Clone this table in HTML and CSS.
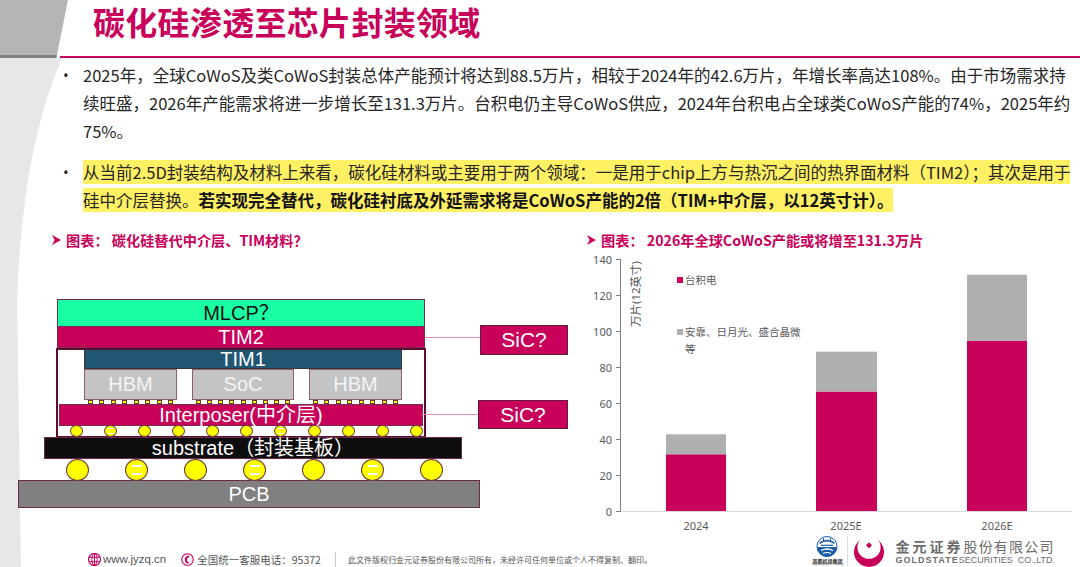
FILE: index.html
```html
<!DOCTYPE html>
<html lang="zh-CN">
<head>
<meta charset="utf-8">
<title>碳化硅渗透至芯片封装领域</title>
<link rel="stylesheet" href="styles.css">
</head>
<body>
<div class="page">
  <svg class="side-deco" width="70" height="567" viewBox="0 0 70 567" aria-hidden="true">
    <polygon points="0,0 68,0 57,55 0,55" fill="#b4b5b7"/>
    <polygon points="0,55 57,55 56.4,58 0,58" fill="#808082"/>
    <path d="M0,58 L62,58 Q22,150 17,300 L21,567 L0,567 Z" fill="#e6e7e8"/>
  </svg>

  <header class="header">
    <h1 class="title">碳化硅渗透至芯片封装领域</h1>
  </header>

  <section class="bullets">
    <div class="bullet">
      <span class="dot">•</span>
      <p class="btext">2025年，全球CoWoS及类CoWoS封装总体产能预计将达到88.5万片，相较于2024年的42.6万片，年增长率高达108%。由于市场需求持<br>续旺盛，2026年产能需求将进一步增长至131.3万片。台积电仍主导CoWoS供应，2024年台积电占全球类CoWoS产能的74%，2025年约<br>75%。</p>
    </div>
    <div class="bullet second">
      <span class="dot">•</span>
      <p class="btext"><span class="hl">从当前2.5D封装结构及材料上来看，碳化硅材料或主要用于两个领域：一是用于chip上方与热沉之间的热界面材料（TIM2）；其次是用于<br>硅中介层替换。<strong class="strong">若实现完全替代，碳化硅衬底及外延需求将是CoWoS产能的2倍（TIM+中介层，以12英寸计）。</strong></span></p>
    </div>
  </section>

  <section class="lower">
    <div class="col-left">
      <div class="fig-title">
        <svg class="arrow" width="9" height="10" viewBox="0 0 9 10" aria-hidden="true"><polygon points="0,0 9,5 0,10 2.6,5" fill="#c8005a"/></svg>
        <span>图表： 碳化硅替代中介层、TIM材料？</span>
      </div>
      <div class="diagram">
        <div class="mlcp">MLCP？</div>
        <div class="tim2">TIM2</div>
        <div class="frame">
          <div class="tim1">TIM1</div>
          <div class="chips">
            <div class="chip hbm">HBM</div>
            <div class="chip soc">SoC</div>
            <div class="chip hbm">HBM</div>
          </div>
          <div class="bumps">
            <div class="bump-group hbm"><i></i><i></i><i></i><i></i><i></i><i></i><i></i><i></i></div>
            <div class="bump-group soc"><i></i><i></i><i></i><i></i><i></i><i></i><i></i><i></i><i></i></div>
            <div class="bump-group hbm"><i></i><i></i><i></i><i></i><i></i><i></i><i></i><i></i></div>
          </div>
          <div class="interposer">Interposer(中介层)</div>
          <div class="balls small">
            <i></i><i class="eq"></i><i></i><i></i><i></i><i></i><i class="eq"></i><i></i><i></i><i></i><i></i>
          </div>
        </div>
        <div class="substrate">substrate（封装基板）</div>
        <div class="balls big">
          <i></i><i class="eq"></i><i></i><i class="eq"></i><i></i><i class="eq"></i><i></i>
        </div>
        <div class="pcb">PCB</div>

        <span class="lead l1"></span>
        <span class="lead l2"></span>
        <div class="callout c1">SiC?</div>
        <div class="callout c2">SiC?</div>
      </div>
    </div>

    <div class="col-right">
      <div class="fig-title">
        <svg class="arrow" width="9" height="10" viewBox="0 0 9 10" aria-hidden="true"><polygon points="0,0 9,5 0,10 2.6,5" fill="#c8005a"/></svg>
        <span>图表： 2026年全球CoWoS产能或将增至131.3万片</span>
      </div>
      <svg class="chart" width="510" height="285" viewBox="0 0 510 285">
        <rect x="96" y="204.3" width="60" height="56.7" fill="#c8005a"/>
        <rect x="96" y="184.3" width="60" height="20" fill="#b0b0b0"/>
        <rect x="246" y="141.5" width="61" height="119.5" fill="#c8005a"/>
        <rect x="246" y="101.7" width="61" height="39.8" fill="#b0b0b0"/>
        <rect x="397" y="91" width="60" height="170" fill="#c8005a"/>
        <rect x="397" y="24.7" width="60" height="66.3" fill="#b0b0b0"/>

        <line x1="50" y1="261.5" x2="502" y2="261.5" stroke="#d9d9d9" stroke-width="1"/>
        <line x1="50.5" y1="9" x2="50.5" y2="262" stroke="#7f7f7f" stroke-width="1"/>
        <g stroke="#7f7f7f" stroke-width="1">
          <line x1="46" y1="261.5" x2="50" y2="261.5"/>
          <line x1="46" y1="225.5" x2="50" y2="225.5"/>
          <line x1="46" y1="189.5" x2="50" y2="189.5"/>
          <line x1="46" y1="153.5" x2="50" y2="153.5"/>
          <line x1="46" y1="117.5" x2="50" y2="117.5"/>
          <line x1="46" y1="81.5" x2="50" y2="81.5"/>
          <line x1="46" y1="45.5" x2="50" y2="45.5"/>
          <line x1="46" y1="9.5" x2="50" y2="9.5"/>
        </g>
        <g class="tick" text-anchor="end">
          <text x="42" y="261">0</text>
          <text x="42" y="225">20</text>
          <text x="42" y="189">40</text>
          <text x="42" y="153">60</text>
          <text x="42" y="117">80</text>
          <text x="42" y="81">100</text>
          <text x="42" y="45">120</text>
          <text x="42" y="9">140</text>
        </g>
        <text class="ytitle" x="65" y="44" text-anchor="middle" transform="rotate(-90 65 44)">万片(12英寸)</text>

        <rect x="107" y="27" width="6" height="6" fill="#c8005a"/>
        <text class="legend" x="115" y="30">台积电</text>
        <rect x="107" y="79" width="6" height="6" fill="#b0b0b0"/>
        <text class="legend" x="115" y="82">安靠、日月光、盛合晶微</text>
        <text class="legend" x="115" y="99">等</text>

        <g class="tick" text-anchor="middle">
          <text x="126" y="275">2024</text>
          <text x="276" y="275">2025E</text>
          <text x="427" y="275">2026E</text>
        </g>
      </svg>
    </div>
  </section>

  <footer class="footer">
    <div class="contact">
      <svg class="ico" width="13" height="13" viewBox="0 0 13 13" aria-hidden="true">
        <circle cx="6.5" cy="6.5" r="6" fill="none" stroke="#c8005a" stroke-width="1.1"/>
        <ellipse cx="6.5" cy="6.5" rx="2.6" ry="6" fill="none" stroke="#c8005a" stroke-width="1"/>
        <line x1="6.5" y1="0.5" x2="6.5" y2="12.5" stroke="#c8005a" stroke-width="1"/>
        <line x1="0.8" y1="4.3" x2="12.2" y2="4.3" stroke="#c8005a" stroke-width="1"/>
        <line x1="0.8" y1="8.7" x2="12.2" y2="8.7" stroke="#c8005a" stroke-width="1"/>
      </svg>
      <span class="site">www.jyzq.cn</span>
      <svg class="ico phone" width="13" height="13" viewBox="0 0 13 13" aria-hidden="true">
        <circle cx="6.5" cy="6.5" r="5.8" fill="none" stroke="#c8005a" stroke-width="1.1"/>
        <path d="M8.2,2.6 C5.2,2.6 3.6,5 3.9,7.6 C4.1,9.5 5.6,10.7 7.4,10.6 L7.9,8.9 C6.8,8.9 6,8.4 5.9,7.2 C5.8,5.8 6.6,4.6 7.8,4.4 Z" fill="#c8005a"/>
      </svg>
      <span class="hotline">全国统一客服电话：95372</span>
      <span class="sep"></span>
      <span class="copy">此文件版权归金元证券股份有限公司所有，未经许可任何单位或个人不得复制、翻印。</span>
    </div>
    <div class="brand">
      <div class="airport">
        <svg width="24" height="21" viewBox="0 0 24 21" aria-hidden="true">
          <circle cx="12" cy="10.5" r="10" fill="#fff" stroke="#1d5fa6" stroke-width="1"/>
          <path d="M2,11 A10,10 0 0 0 22,11 Z" fill="#1d5fa6"/>
          <path d="M4.5,7.2 Q12,2.2 19.5,7.2" fill="none" stroke="#1d5fa6" stroke-width="1.8"/>
          <line x1="8.5" y1="5" x2="8.5" y2="2.2" stroke="#1d5fa6" stroke-width="1.2"/>
          <line x1="15.5" y1="5" x2="15.5" y2="2.2" stroke="#1d5fa6" stroke-width="1.2"/>
          <line x1="6" y1="9.3" x2="18" y2="9.3" stroke="#1d5fa6" stroke-width="1.2"/>
          <path d="M6,14.5 Q12,11.5 18,14.5" fill="none" stroke="#fff" stroke-width="1.3"/>
          <path d="M8,17.5 Q12,15.5 16,17.5" fill="none" stroke="#fff" stroke-width="1.1"/>
        </svg>
        <span class="ap-cn">首都机场集团</span>
        <span class="ap-en">Capital Airports Holding</span>
      </div>
      <span class="vdiv"></span>
      <svg class="gs-logo" width="36" height="31" viewBox="0 0 36 31" aria-hidden="true">
        <circle cx="18" cy="16" r="15" fill="#c8005a"/>
        <circle cx="18" cy="11.2" r="11.6" fill="#fff"/>
        <polygon points="18,6.2 21,9.2 18,12.2 15,9.2" fill="#c8005a"/>
      </svg>
      <div class="gs-name">
        <div class="gs-cn"><b>金元证券</b>股份有限公司</div>
        <div class="gs-en"><b>GOLDSTATE</b>SECURITIES&nbsp; CO.,LTD.</div>
      </div>
    </div>
  </footer>
</div>
</body>
</html>
```

FILE: styles.css
```css
* { box-sizing: border-box; }

html, body {
  margin: 0;
  padding: 0;
  background: #ffffff;
}

body {
  font-family: "Noto Sans", "Noto Sans CJK SC", sans-serif;
  color: #262626;
}

.page {
  position: relative;
  width: 1080px;
  height: 567px;
  overflow: hidden;
  background: #ffffff;
}

.side-deco {
  position: absolute;
  left: 0;
  top: 0;
  z-index: 0;
}

.header,
.bullets,
.lower,
.footer {
  position: relative;
  z-index: 1;
}

/* ---------- header ---------- */
.header {
  display: flex;
  align-items: flex-start;
  height: 58px;
  margin-left: 60px;
  border-bottom: 2px solid #c8005a;
}

.title {
  margin: -2px 0 0 0;
  padding-left: 33px;
  font-family: "Noto Sans CJK SC", sans-serif;
  font-weight: 700;
  font-size: 32px;
  line-height: 46px;
  color: #c8005a;
  letter-spacing: 0.3px;
  white-space: nowrap;
}

/* ---------- bullets ---------- */
.bullets {
  padding-top: 3px;
  padding-left: 63px;
}

.bullet {
  display: flex;
  align-items: flex-start;
}

.bullet.second {
  margin-top: 13px;
}

.dot {
  width: 20px;
  flex: none;
  font-size: 15px;
  line-height: 28px;
  color: #262626;
}

.btext {
  margin: 0;
  font-family: "Noto Sans CJK SC", sans-serif;
  font-size: 16.5px;
  line-height: 28px;
  white-space: nowrap;
  color: #262626;
}

.hl {
  background: #fff064;
}

.strong {
  font-weight: 700;
  color: #111111;
}

/* ---------- lower section ---------- */
.lower {
  display: flex;
  height: 321px;
}

.col-left {
  width: 570px;
  flex: none;
}

.col-right {
  flex: 1;
}

.fig-title {
  display: flex;
  align-items: center;
  gap: 5px;
  height: 20px;
  margin-top: 16px;
  font-family: "Noto Sans CJK SC", sans-serif;
  font-weight: 700;
  font-size: 14.2px;
  color: #c8005a;
  white-space: nowrap;
}

.col-left .fig-title { margin-left: 52px; }
.col-right .fig-title { margin-left: 17px; }

.arrow { flex: none; }

/* ---------- diagram ---------- */
.diagram {
  position: relative;
  height: 208px;
  margin-top: 49px;
  font-family: "Liberation Sans", Arial, "Noto Sans CJK SC", sans-serif;
  font-size: 20px;
  text-align: center;
  white-space: nowrap;
}

.mlcp {
  margin-left: 57px;
  width: 368px;
  height: 28px;
  line-height: 26px;
  background: #1affa3;
  border: 1px solid #7b2a4f;
  color: #111111;
}

.tim2 {
  margin-left: 57px;
  width: 368px;
  height: 21px;
  line-height: 20px;
  background: #c8005a;
  border: 1px solid #7b2a4f;
  border-top: 0;
  color: #ffffff;
}

.frame {
  margin-left: 56px;
  width: 370px;
  height: 90px;
  border: 2px solid #5c0d33;
}

.tim1 {
  margin-left: 26px;
  width: 318px;
  height: 19px;
  line-height: 18px;
  background: #215673;
  border: 1px solid #3b3346;
  border-top: 0;
  color: #ffffff;
}

.chips,
.bumps {
  display: flex;
  gap: 15px;
  margin-left: 26px;
}

.chips { height: 31px; }

.chip {
  height: 31px;
  line-height: 29px;
  background: #c4c4c4;
  border: 1px solid #8d6070;
  color: #f4f4f4;
}

.chip.hbm, .bump-group.hbm { width: 93px; }
.chip.soc, .bump-group.soc { width: 102px; }

.bumps { height: 4px; }

.bump-group {
  display: flex;
  justify-content: space-between;
  padding: 0 4px;
}

.bump-group i {
  display: block;
  width: 5px;
  height: 4px;
  background: #ffff00;
  border: 1px solid #6b3b3b;
}

.interposer {
  margin-left: 1px;
  width: 364px;
  height: 22px;
  line-height: 21px;
  background: #c8005a;
  border: 1px solid #7a2a50;
  color: #ffffff;
}

.balls {
  display: flex;
  align-items: center;
}

.balls i {
  display: flex;
  align-items: center;
  justify-content: center;
  flex: none;
  border-radius: 50%;
  background: #ffff00;
  border: 1px solid #6b3b3b;
}

.balls.small {
  height: 10px;
  gap: 21px;
  margin-left: 12px;
}

.balls.small i {
  width: 13px;
  height: 12px;
}

.balls.small i.eq::after {
  content: "";
  display: block;
  width: 6px;
  height: 4px;
  border-top: 1px solid #ffffff;
  border-bottom: 1px solid #ffffff;
}

.substrate {
  margin-top: -1px;
  margin-left: 44px;
  width: 418px;
  height: 22px;
  line-height: 20px;
  background: #0d0d0d;
  border: 1px solid #6b2a4a;
  color: #ffffff;
}

.balls.big {
  height: 21px;
  gap: 36px;
  margin-left: 66px;
}

.balls.big i {
  width: 23px;
  height: 22px;
}

.balls.big i.eq::after {
  content: "";
  display: block;
  width: 10px;
  height: 6px;
  border-top: 2px solid #ffffff;
  border-bottom: 2px solid #ffffff;
}

.pcb {
  margin-left: 18px;
  width: 462px;
  height: 28px;
  line-height: 26px;
  background: #808080;
  border: 1px solid #6b2a4a;
  color: #ffffff;
}

/* callouts over the diagram */
.lead {
  position: absolute;
  height: 1px;
  background: #f38db5;
}

.l1 { left: 425px; top: 38px; width: 55px; }
.l2 { left: 422px; top: 115px; width: 56px; }

.callout {
  position: absolute;
  background: #c8005a;
  border: 1px solid #5a1d3c;
  color: #ffffff;
  font-size: 21px;
}

.c1 { left: 480px; top: 26px; width: 88px; height: 30px; line-height: 28px; }
.c2 { left: 478px; top: 101px; width: 90px; height: 29px; line-height: 27px; }

/* ---------- chart ---------- */
.chart {
  display: block;
  overflow: visible;
}

.chart text {
  font-family: "Noto Sans", "Noto Sans CJK SC", sans-serif;
  fill: #595959;
  dominant-baseline: central;
}

.chart .tick { font-size: 11px; }
.chart .legend { font-size: 10.5px; }
.chart .ytitle { font-size: 11.5px; }

/* ---------- footer ---------- */
.footer {
  display: flex;
  height: 32px;
}

.contact {
  display: flex;
  align-items: center;
  height: 16px;
  margin-top: 16px;
  margin-left: 88px;
  color: #555555;
  white-space: nowrap;
}

.ico { flex: none; display: block; }

.site {
  margin-left: 2px;
  font-family: "Liberation Sans", Arial, sans-serif;
  font-size: 11.5px;
}

.phone { margin-left: 15px; }

.hotline {
  margin-left: 3px;
  font-family: "Noto Sans CJK SC", sans-serif;
  font-size: 10.5px;
}

.sep {
  width: 1px;
  height: 15px;
  margin-left: 14px;
  background: #cccccc;
}

.copy {
  margin-left: 12px;
  font-family: "Noto Sans CJK SC", sans-serif;
  font-size: 8px;
  color: #555555;
}

.brand {
  display: flex;
  align-items: center;
  margin-left: auto;
  margin-right: 25px;
  height: 32px;
}

.airport {
  display: flex;
  flex-direction: column;
  align-items: center;
  width: 34px;
  height: 32px;
  padding-top: 1px;
  line-height: 1;
  white-space: nowrap;
}

.airport svg { display: block; }

.ap-cn {
  margin-top: 1px;
  font-family: "Noto Sans CJK SC", sans-serif;
  font-weight: 700;
  font-size: 5px;
  color: #333333;
}

.ap-en {
  font-family: "Liberation Sans", Arial, sans-serif;
  font-size: 3px;
  color: #555555;
}

.vdiv {
  width: 1px;
  height: 30px;
  margin: 0 3px 0 3px;
  background: #dddddd;
}

.gs-logo { display: block; flex: none; }

.gs-name {
  margin-left: 8px;
  height: 28px;
  color: #6d6d6d;
  white-space: nowrap;
}

.gs-cn {
  font-family: "Noto Sans CJK SC", sans-serif;
  font-size: 14px;
  line-height: 18px;
  letter-spacing: 1.2px;
}

.gs-cn b {
  font-weight: 700;
  letter-spacing: 3px;
}

.gs-en {
  font-family: "Liberation Sans", Arial, sans-serif;
  font-size: 9px;
  line-height: 10px;
  color: #6d6d6d;
}

.gs-en b {
  font-weight: 700;
  letter-spacing: 1px;
}
```
